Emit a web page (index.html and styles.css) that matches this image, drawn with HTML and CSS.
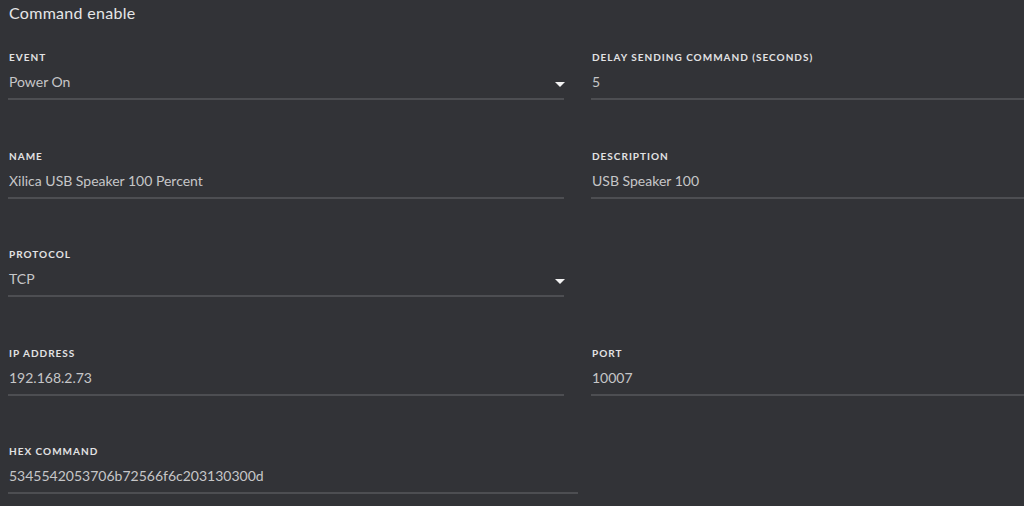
FILE: index.html
```html
<!DOCTYPE html>
<html>
<head>
<meta charset="utf-8">
<link rel="stylesheet" href="styles.css">
</head>
<body>
<div class="page">
  <h1 class="title">Command enable</h1>
  <div class="form">
    <div class="field select">
      <div class="label">EVENT</div>
      <div class="value">Power On<span class="arrow"></span></div>
    </div>
    <div class="field">
      <div class="label">DELAY SENDING COMMAND (SECONDS)</div>
      <div class="value">5</div>
    </div>
    <div class="field">
      <div class="label">NAME</div>
      <div class="value">Xilica USB Speaker 100 Percent</div>
    </div>
    <div class="field">
      <div class="label">DESCRIPTION</div>
      <div class="value">USB Speaker 100</div>
    </div>
    <div class="field select">
      <div class="label">PROTOCOL</div>
      <div class="value">TCP<span class="arrow"></span></div>
    </div>
    <div class="empty"></div>
    <div class="field">
      <div class="label">IP ADDRESS</div>
      <div class="value">192.168.2.73</div>
    </div>
    <div class="field">
      <div class="label">PORT</div>
      <div class="value">10007</div>
    </div>
    <div class="field wide">
      <div class="label">HEX COMMAND</div>
      <div class="value">5345542053706b72566f6c203130300d</div>
    </div>
  </div>
</div>
</body>
</html>
```
FILE: styles.css
```css
html, body {
  margin: 0;
  padding: 0;
  background: #323337;
  overflow: hidden;
}
body {
  font-family: Lato, "Open Sans", sans-serif;
  color: #c9c9cb;
}
.page {
  padding: 0 0 0 8px;
}
.title {
  margin: 0;
  font-size: 16px;
  line-height: 26px;
  font-weight: 400;
  letter-spacing: 0.3px;
  color: #e6e6e8;
  padding-left: 1px;
}
.form {
  display: grid;
  grid-template-columns: 556px 556px;
  column-gap: 27px;
  row-gap: 49.5px;
  padding-top: 25px;
  width: 1139px;
}
.field {
  border-bottom: 2px solid #4d4e52;
  padding-bottom: 6px;
}
.wide {
  width: 570px;
}
.label {
  font-size: 10px;
  line-height: 12px;
  font-weight: 700;
  color: #e2e2e4;
  letter-spacing: 1px;
  padding-left: 1px;
}
.value {
  margin-top: 9px;
  font-size: 14px;
  line-height: 20px;
  color: #c6c6c8;
  padding-left: 1px;
  display: flex;
  align-items: center;
  justify-content: space-between;
}
.arrow {
  width: 0;
  height: 0;
  border-left: 5px solid transparent;
  border-right: 5px solid transparent;
  border-top: 5px solid #f2f2f2;
  margin-right: -1px;
  margin-top: 5px;
}
```
